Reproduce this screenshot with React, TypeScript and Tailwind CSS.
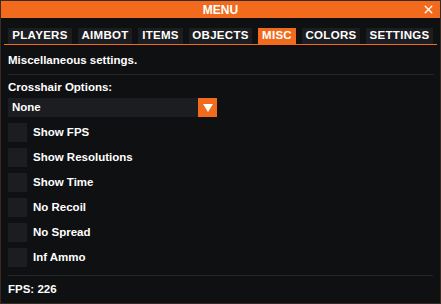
import { X } from 'lucide-react';

const tabs = [
    { name: 'PLAYERS', w: 'w-[64px]' },
    { name: 'AIMBOT', w: 'w-[54px]' },
    { name: 'ITEMS', w: 'w-[45px]' },
    { name: 'OBJECTS', w: 'w-[63px]' },
    { name: 'MISC', w: 'w-[38px]' },
    { name: 'COLORS', w: 'w-[58px]' },
    { name: 'SETTINGS', w: 'w-[67px]' },
];
const options = ['Show FPS', 'Show Resolutions', 'Show Time', 'No Recoil', 'No Spread', 'Inf Ammo'];

export default function App() {
    return (
        <div className="w-[441px] h-[304px] bg-[#0f1012] border border-[#3a2a22] flex flex-col text-white font-bold text-[11.5px] leading-none" style={{ fontFamily: '"Liberation Sans", Arial, sans-serif' }}>
            <div className="h-[17px] bg-[#f26a1b] flex items-center justify-center relative shrink-0">
                <span className="text-[12px]">MENU</span>
                <X className="absolute right-[5px] top-[2px] w-[13px] h-[13px]" strokeWidth={2.5} />
            </div>
            <div className="px-[3px] pt-[10px]">
                <div className="flex gap-[6px] px-[4px] border-b border-[#f26a1b]">
                    {tabs.map((tab) => (
                        <div key={tab.name} className={`${tab.w} h-[16px] flex items-center justify-center text-[11.5px] tracking-[0.3px] ${tab.name === 'MISC' ? 'bg-[#f26a1b]' : 'bg-[#1c1d21]'}`}>
                            {tab.name}
                        </div>
                    ))}
                </div>
            </div>
            <div className="px-[7px] flex flex-col flex-1">
                <div className="pt-[10px] pb-[7px] border-b border-[#26272b] mr-[-1px]">Miscellaneous settings.</div>
                <div className="pt-[7px]">Crosshair Options:</div>
                <div className="mt-[5px] w-[209px] h-[19px] bg-[#1c1d21] flex items-center">
                    <span className="flex-1 pl-[4px]">None</span>
                    <div className="w-[19px] h-[19px] bg-[#f26a1b] flex items-center justify-center">
                        <svg width="10" height="8" viewBox="0 0 10 8"><path d="M0 0H10L5 8Z" fill="#fff" /></svg>
                    </div>
                </div>
                <div className="flex flex-col gap-[6px] mt-[6px]">
                    {options.map((o) => (
                        <div key={o} className="flex items-center gap-[6px]">
                            <div className="w-[19px] h-[19px] bg-[#1c1d21]" />
                            <span>{o}</span>
                        </div>
                    ))}
                </div>
                <div className="mt-auto border-t border-[#26272b] pt-[8px] pb-[8px]">FPS: 226</div>
            </div>
        </div>
    );
}
